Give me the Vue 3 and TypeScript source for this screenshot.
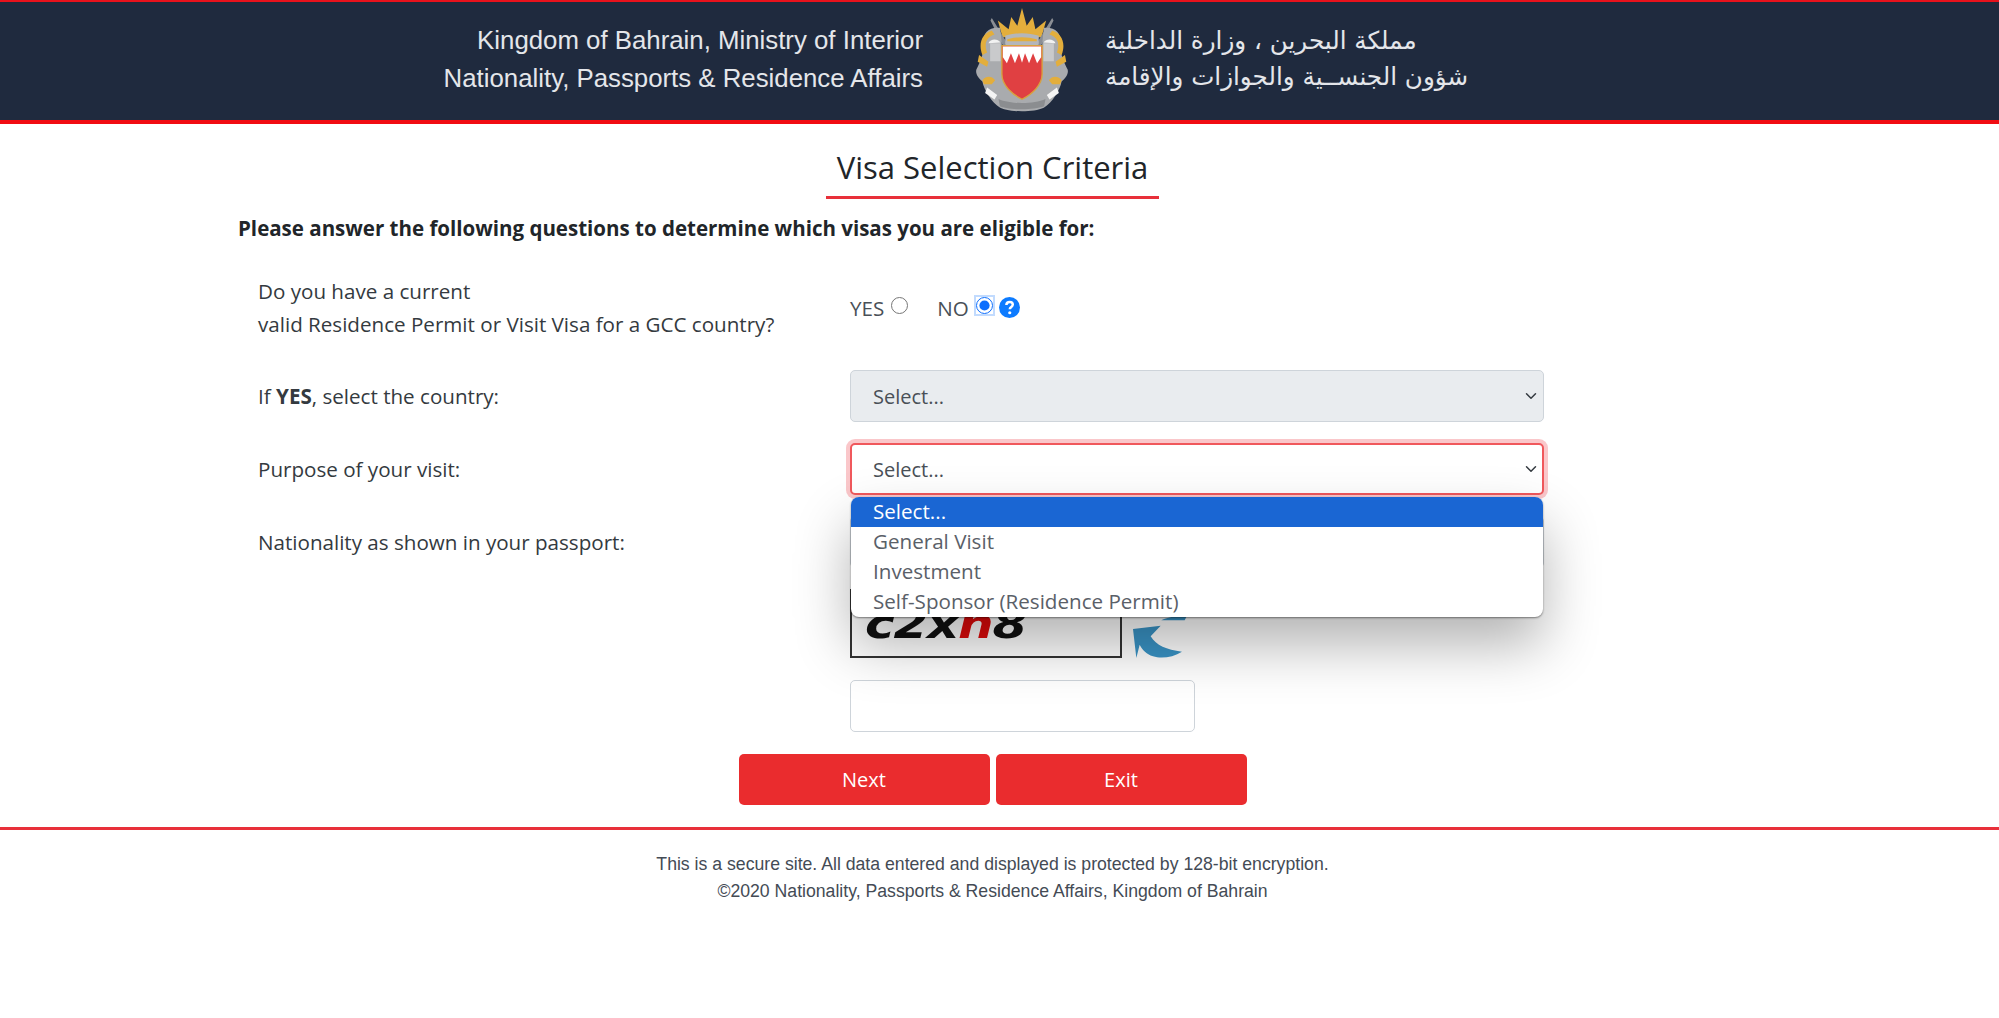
<script setup lang="ts">
import { ref } from 'vue'

const options = ['Select...', 'General Visit', 'Investment', 'Self-Sponsor (Residence Permit)']
const hasPermit = ref('no')
const captchaValue = ref('')
</script>

<template>
  <div class="page">
    <header class="top-header">
      <div class="header-en">
        <div>Kingdom of Bahrain, Ministry of Interior</div>
        <div>Nationality, Passports &amp; Residence Affairs</div>
      </div>
      <!-- coat of arms -->
      <svg class="emblem" viewBox="100 25 280 310" aria-hidden="true">
        <path d="M240 25 L254 78 L272 52 L280 88 L312 62 L298 112 L182 112 L168 62 L200 88 L208 52 L226 78 Z" fill="#e3ae3c" />
        <path d="M150 55 L196 130 L184 138 L146 62 Z M330 55 L284 130 L296 138 L334 62 Z" fill="#8b8e94" />
        <path d="M190 108 C220 98 260 98 290 108 L290 135 L190 135 Z" fill="#b4b6ba" />
        <path d="M196 118 C225 110 255 110 284 118 L284 124 L196 124 Z" fill="#e3ae3c" />
        <path d="M175 84 C140 80 120 100 124 140 C126 160 118 180 104 208 C100 222 112 236 122 244 C126 268 150 308 175 322 C205 336 275 336 305 322 C330 308 354 268 358 244 C368 236 380 222 376 208 C362 180 354 160 356 140 C360 100 340 80 305 84 L300 135 L180 135 Z" fill="#a9abae" />
        <path d="M150 92 C122 100 108 130 122 165 L136 158 C126 130 134 112 158 104 Z M330 92 C358 100 372 130 358 165 L344 158 C354 130 346 112 322 104 Z" fill="#e3ae3c" />
        <path d="M112 165 L140 185 L136 200 L108 185 Z M368 165 L340 185 L344 200 L372 185 Z M122 240 C134 226 150 228 160 240 L150 252 L126 252 Z M358 240 C346 226 330 228 320 240 L330 252 L354 252 Z" fill="#e3ae3c" />
        <path d="M145 130 H176 V184 H145 Z M304 130 H335 V184 H304 Z" fill="#c9cacc" />
        <path d="M140 130 C146 116 168 116 176 128 Z M340 130 C334 116 312 116 304 128 Z" fill="#f2f2f2" />
        <path d="M136 262 L166 284 L158 298 L130 278 Z M344 262 L314 284 L322 298 L350 278 Z" fill="#f4f4f4" />
        <path d="M170 296 C205 312 275 312 310 296 L306 318 C275 330 205 330 174 318 Z" fill="#8b8d90" />
        <path d="M180 137 H300 V222 C300 255 270 282 240 297 C210 282 180 255 180 222 Z" fill="#e04042" stroke="#d8a23e" stroke-width="4" />
        <path d="M183 140 H297 V172 L285 190 L273 160 L261 190 L249 160 L240 188 L231 160 L219 190 L207 160 L195 190 L183 172 Z" fill="#fff" />
      </svg>
      <div class="header-ar" dir="rtl">
        <div>مملكة البحرين ، وزارة الداخلية</div>
        <div>شؤون الجنســية والجوازات والإقامة</div>
      </div>
    </header>

    <main class="content">
      <div class="title-wrap">
        <h1 class="page-title">Visa Selection Criteria</h1>
      </div>
      <p class="intro">Please answer the following questions to determine which visas you are eligible for:</p>

      <div class="form-row first-row">
        <label class="row-label">Do you have a current<br />valid Residence Permit or Visit Visa for a GCC country?</label>
        <div class="radio-group">
          <label class="radio-item">YES<input v-model="hasPermit" type="radio" value="yes" class="radio" /></label>
          <label class="radio-item">NO<input v-model="hasPermit" type="radio" value="no" class="radio" /></label>
          <span class="help-icon">
            <svg viewBox="0 0 16 16" width="21" height="21">
              <circle cx="8" cy="8" r="8" fill="#0d7bff" />
              <path d="M5.600 6.100C5.700 4.600 6.700 3.800 8.100 3.800C9.500 3.800 10.500 4.600 10.500 5.800C10.500 7.600 8.200 7.600 8.200 9.400" fill="none" stroke="#fff" stroke-width="1.900" />
              <circle cx="8.200" cy="12" r="1.200" fill="#fff" />
            </svg>
          </span>
        </div>
      </div>

      <div class="form-row second-row">
        <label class="row-label">If <b>YES</b>, select the country:</label>
        <div class="select-box disabled">
          <span>Select...</span>
          <svg class="chevron" viewBox="0 0 16 16"><path d="M2 5l6 6 6-6" fill="none" stroke="#343a40" stroke-width="2" stroke-linecap="round" stroke-linejoin="round" /></svg>
        </div>
      </div>

      <div class="form-row">
        <label class="row-label">Purpose of your visit:</label>
        <div class="select-wrap">
          <div class="select-box focused">
            <span>Select...</span>
            <svg class="chevron" viewBox="0 0 16 16"><path d="M2 5l6 6 6-6" fill="none" stroke="#343a40" stroke-width="2" stroke-linecap="round" stroke-linejoin="round" /></svg>
          </div>
          <ul class="dropdown-menu">
            <li v-for="(opt, i) in options" :key="opt" class="dropdown-item" :class="{ active: i === 0 }">{{ opt }}</li>
          </ul>
        </div>
      </div>

      <div class="form-row">
        <label class="row-label">Nationality as shown in your passport:</label>
        <div class="select-box"></div>
      </div>

      <div class="captcha-row">
        <div class="captcha-img"><span class="captcha-text">c2x<span class="captcha-red">n</span>8</span></div>
        <svg class="refresh" viewBox="885 40 165 165" aria-hidden="true">
          <path d="M970 92 C985 84 1010 78 1048 76 L1040 92 Z" fill="#3a94c6" />
          <path d="M885 118 L968 108 L938 140 C955 168 985 180 1032 186 C1005 203 970 208 945 200 C925 193 912 180 905 165 L895 205 Z" fill="#3a94c6" />
        </svg>
      </div>
      <input v-model="captchaValue" class="captcha-input" type="text" />

      <div class="actions">
        <button class="btn">Next</button>
        <button class="btn">Exit</button>
      </div>
    </main>

    <footer class="site-footer">
      <div class="footer-text">
        <div>This is a secure site. All data entered and displayed is protected by 128-bit encryption.</div>
        <div>©2020 Nationality, Passports &amp; Residence Affairs, Kingdom of Bahrain</div>
      </div>
    </footer>
  </div>
</template>

<style scoped>
.page {
  font-family: "Open Sans", "Noto Sans", sans-serif;
  color: #212529;
  background: #fff;
  min-height: 1018px;
  overflow: hidden;
}

.top-header {
  height: 124px;
  box-sizing: border-box;
  background: #1f2a3e;
  border-top: 2px solid #e8121c;
  border-bottom: 4px solid #f10c12;
  display: flex;
  align-items: center;
  padding-left: 442px;
}
.header-en {
  width: 481px;
  margin-top: -5px;
  text-align: right;
  color: #e4e6ea;
  font-family: "Liberation Sans", sans-serif;
  font-size: 25.800px;
  line-height: 38px;
  white-space: nowrap;
}
.emblem {
  width: 94px;
  height: 104px;
  margin: -2px 0 0 52px;
  flex: none;
  filter: blur(0.6px);
}
.header-ar {
  margin: -4px 0 0 36px;
  color: #e4e6ea;
  font-family: "DejaVu Sans", sans-serif;
  font-size: 24.600px;
  line-height: 36px;
  white-space: nowrap;
  text-align: left;
}

.content {
  width: 1985px;
  box-sizing: border-box;
  padding-left: 238px;
}
.title-wrap {
  display: flex;
  justify-content: center;
  padding-right: 238px;
}
.page-title {
  width: 333px;
  height: 75px;
  box-sizing: border-box;
  margin: 0;
  padding-top: 21px;
  border-bottom: 3px solid #e8303a;
  text-align: center;
  font-size: 31px;
  font-weight: 400;
  line-height: 44px;
  color: #212529;
}
.intro {
  margin: 13px 0 0;
  font-size: 20.500px;
  line-height: 32px;
  font-weight: 700;
}

.form-row {
  display: flex;
  align-items: center;
  margin-top: 21px;
}
.first-row {
  margin-top: 31px;
  height: 66px;
}
.second-row {
  margin-top: 29px;
}
.row-label {
  width: 612px;
  flex: none;
  padding-left: 20px;
  box-sizing: border-box;
  font-size: 20.600px;
  line-height: 33px;
  color: #343a40;
}
.radio-group {
  display: flex;
  align-items: center;
  margin-top: -1px;
  color: #495057;
  font-size: 20.600px;
}
.radio-item {
  display: flex;
  align-items: center;
  margin-right: 29px;
}
.radio-item:nth-child(2) {
  margin-right: 6px;
}
.radio {
  margin: 0 0 4px 7px;
  width: 17px;
  height: 17px;
  border-radius: 50%;
  accent-color: #0d6efd;
}
.radio:checked {
  box-shadow: 0 0 0 2px rgba(13, 110, 253, 0.25);
}
.help-icon {
  display: flex;
}

.select-wrap {
  position: relative;
}
.select-box {
  width: 694px;
  height: 52px;
  box-sizing: border-box;
  display: flex;
  align-items: center;
  justify-content: space-between;
  padding: 0 6px 0 22px;
  background: #fff;
  border: 1px solid #ced4da;
  border-radius: 5px;
  color: #495057;
  font-size: 20px;
}
.select-box.disabled {
  background: #e9ecef;
}
.select-box.focused {
  padding: 0 5px 0 21px;
  border: 2px solid #f0585c;
  box-shadow: 0 0 0 4px rgba(240, 70, 80, 0.3);
}
.chevron {
  width: 12px;
  height: 12px;
}

.dropdown-menu {
  position: absolute;
  top: 54px;
  left: 1px;
  width: 692px;
  margin: 0;
  padding: 0;
  list-style: none;
  background: #fff;
  border-radius: 8px;
  overflow: hidden;
  box-shadow: 0 1px 2px rgba(0, 0, 0, 0.45), 0 28px 56px rgba(0, 0, 0, 0.3);
  z-index: 20;
}
.dropdown-item {
  height: 30px;
  line-height: 29px;
  padding-left: 22px;
  font-size: 20.600px;
  color: #5a6068;
}
.dropdown-item.active {
  background: #1a66d3;
  color: #fff;
}

.captcha-row {
  display: flex;
  align-items: flex-end;
  margin: 21px 0 0 612px;
}
.captcha-img {
  width: 272px;
  height: 69px;
  box-sizing: border-box;
  border: 2px solid #333;
  background: #fff;
  padding: 9px 0 0 13px;
}
.captcha-text {
  display: inline-block;
  transform: scaleX(1.22);
  transform-origin: left;
  font-family: "DejaVu Sans", sans-serif;
  font-size: 41px;
  font-weight: 700;
  font-style: italic;
  line-height: 48px;
  letter-spacing: -1px;
  color: #111;
}
.captcha-red {
  color: #e00a0a;
}
.refresh {
  width: 55px;
  height: 55px;
  margin: 0 0 0 11px;
}
.captcha-input {
  display: block;
  width: 345px;
  height: 52px;
  box-sizing: border-box;
  margin: 22px 0 0 612px;
  border: 1px solid #ced4da;
  border-radius: 5px;
}

.actions {
  display: flex;
  justify-content: center;
  gap: 6px;
  margin-top: 22px;
  padding-right: 238px;
}
.btn {
  width: 251px;
  height: 51px;
  border: none;
  border-radius: 5px;
  background: #ea2c2e;
  color: #fff;
  font-family: inherit;
  font-size: 20px;
}

.site-footer {
  margin-top: 22px;
  border-top: 3px solid #e8303a;
}
.footer-text {
  width: 1985px;
  padding-top: 21px;
  text-align: center;
  font-family: "Liberation Sans", sans-serif;
  font-size: 17.660px;
  line-height: 27px;
  color: #444b55;
}
</style>
